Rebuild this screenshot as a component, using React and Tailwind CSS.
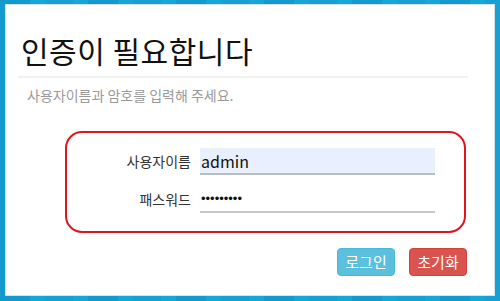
export default function App() {
  return (
    <div
      className="w-[500px] h-[301px] pt-[4px] pl-[5px] pr-[5px] pb-[5px] bg-[#17a6d8] bg-[repeating-linear-gradient(90deg,rgba(0,60,120,0.12)_0px,rgba(0,60,120,0.12)_30px,transparent_30px,transparent_45px,rgba(0,60,120,0.06)_45px,rgba(0,60,120,0.06)_73px,transparent_73px,transparent_88px)]"
      style={{ fontFamily: '"Noto Sans CJK KR", "Noto Sans", sans-serif' }}
    >
      <div className="h-full w-full bg-white border border-[#d6e3ea] flex flex-col">
        <div className="pl-[15px] pt-[25px]">
          <h1 className="text-[30px] leading-[40px] text-[#111] font-normal tracking-[0.5px]">인증이 필요합니다</h1>
        </div>
        <div className="ml-[12px] mt-[6px] w-[450px] h-[2px] bg-[#f2f2f2]" />
        <p className="pl-[21px] mt-[7px] text-[14px] leading-[20px] text-[#9a9a9a]">
          사용자이름과 암호를 입력해 주세요.
        </p>
        <div className="ml-[59px] mt-[26px] w-[401px] h-[102px] border-2 border-[#e0141e] rounded-[17px] pt-[15px] flex flex-col gap-[11px]">
          <div className="flex items-center">
            <label className="w-[124px] text-right text-[14px] text-[#333]">사용자이름</label>
            <div className="ml-[9px] w-[235px] h-[27px] bg-[#e8f0fe] border-b-2 border-[#b8bcc4] flex items-center pl-[1px] text-[16px] text-[#111]">
              admin
            </div>
          </div>
          <div className="flex items-center">
            <label className="w-[124px] text-right text-[14px] text-[#333]">패스워드</label>
            <div
              className="ml-[9px] w-[235px] h-[27px] border-b-2 border-[#c8c8c8] flex items-center pl-[1px] text-[13px] text-[#111]"
              style={{ fontFamily: '"Liberation Sans", sans-serif' }}
            >
              •••••••••
            </div>
          </div>
        </div>
        <div className="mt-[15px] ml-[331px] flex gap-[14px]">
          <button className="w-[58px] h-[28px] rounded-[4px] bg-[#5bc0de] border border-[#46b8da] text-white text-[15px]">로그인</button>
          <button className="w-[58px] h-[28px] rounded-[4px] bg-[#d9534f] border border-[#d43f3a] text-white text-[15px]">초기화</button>
        </div>
      </div>
    </div>
  );
}
